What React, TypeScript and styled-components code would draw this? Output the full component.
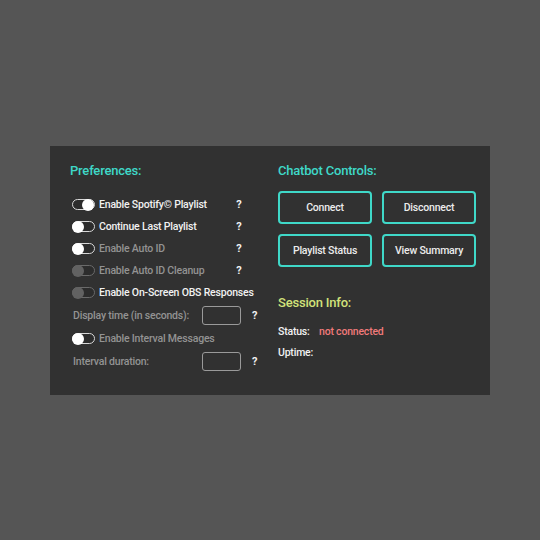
import React from "react";
import styled, { createGlobalStyle } from "styled-components";

const GlobalStyle = createGlobalStyle`
  html, body {
    margin: 0;
    padding: 0;
    background: #555555;
    font-family: Roboto, "Liberation Sans", sans-serif;
  }
  * { box-sizing: border-box; }
`;

const Page = styled.div`
  width: 540px;
  height: 540px;
  display: flex;
  align-items: center;
  justify-content: center;
`;

const Panel = styled.section`
  width: 440px;
  height: 249px;
  background: #313131;
  display: grid;
  grid-template-columns: 208px 198px;
  padding: 17px 14px 0 20px;
`;

const Column = styled.div`
  display: flex;
  flex-direction: column;
`;

const Heading = styled.h2<{ $tone?: "teal" | "lime"; $mt?: number }>`
  margin: ${(p) => p.$mt ?? 0}px 0 0 0;
  font-size: 13px;
  line-height: 16px;
  font-weight: 500;
  letter-spacing: -0.2px;
  color: ${(p) => (p.$tone === "lime" ? "#d2e27a" : "#3fd8c8")};
`;

const List = styled.div`
  margin-top: 15px;
  display: flex;
  flex-direction: column;
`;

const ToggleRow = styled.div`
  height: 22px;
  display: grid;
  grid-template-columns: 29px 133px 14px;
  align-items: center;
`;

const InputRow = styled.div`
  height: 24px;
  display: grid;
  grid-template-columns: 132px 39px 1fr;
  align-items: center;
`;

const Label = styled.span<{ $dim?: boolean; $indent?: boolean }>`
  font-size: 10.5px;
  font-weight: 500;
  letter-spacing: -0.2px;
  white-space: nowrap;
  color: ${(p) => (p.$dim ? "#939393" : "#f1f1f1")};
  padding-left: ${(p) => (p.$indent ? 3 : 0)}px;
`;

const Help = styled.span<{ $pad?: number }>`
  font-size: 11px;
  font-weight: 700;
  color: #f1f1f1;
  text-align: ${(p) => (p.$pad ? "left" : "center")};
  padding-left: ${(p) => p.$pad ?? 0}px;
`;

const Track = styled.span<{ $on?: boolean; $disabled?: boolean }>`
  position: relative;
  margin-left: 2px;
  width: 23px;
  height: 11px;
  border-radius: 6px;
  border: 1px solid ${(p) => (p.$disabled ? "#6a6a6a" : "#d8d8d8")};
  background: #2c2c2c;
  display: block;
`;

const Knob = styled.span<{ $on?: boolean; $disabled?: boolean }>`
  position: absolute;
  top: -1.5px;
  left: ${(p) => (p.$on ? "9px" : "-1px")};
  width: 12px;
  height: 12px;
  border-radius: 50%;
  background: ${(p) => (p.$disabled ? "#626262" : "#ffffff")};
`;

const TextBox = styled.input`
  width: 39px;
  height: 19px;
  border: 1px solid #9a9a9a;
  border-radius: 3px;
  background: transparent;
  padding: 0 4px;
  color: #f1f1f1;
  font: 11px Roboto, sans-serif;
  outline: none;
`;

const ButtonGrid = styled.div`
  margin-top: 12px;
  display: grid;
  grid-template-columns: 94px 94px;
  grid-auto-rows: 33px;
  gap: 10px;
`;

const ActionButton = styled.button`
  background: transparent;
  border: 2px solid #3fd8c8;
  border-radius: 4px;
  color: #ececec;
  font-family: Roboto, sans-serif;
  font-size: 10.5px;
  font-weight: 500;
  letter-spacing: -0.2px;
  padding: 0;
  cursor: pointer;
`;

const InfoList = styled.div`
  margin-top: 10px;
  display: flex;
  flex-direction: column;
`;

const InfoRow = styled.div`
  display: flex;
  line-height: 21px;
  font-size: 10.5px;
  font-weight: 500;
  letter-spacing: -0.2px;
`;

const InfoKey = styled.span`
  width: 41px;
  color: #f1f1f1;
`;

const InfoValue = styled.span<{ $alert?: boolean }>`
  color: ${(p) => (p.$alert ? "#f07a7a" : "#f1f1f1")};
`;

function Toggle({ on, disabled }: { on?: boolean; disabled?: boolean }) {
  return (
    <Track $on={on} $disabled={disabled}>
      <Knob $on={on} $disabled={disabled} />
    </Track>
  );
}

const toggles: { label: string; on?: boolean; knobOff?: boolean; dim?: boolean; help: boolean }[] = [
  { label: "Enable Spotify\u00A9 Playlist", on: true, help: true },
  { label: "Continue Last Playlist", help: true },
  { label: "Enable Auto ID", dim: true, help: true },
  { label: "Enable Auto ID Cleanup", dim: true, knobOff: true, help: true },
  { label: "Enable On-Screen OBS Responses", knobOff: true, help: false },
];

export default function App() {
  return (
    <>
      <GlobalStyle />
      <Page>
        <Panel>
          <Column>
            <Heading>Preferences:</Heading>
            <List>
              {toggles.map((t) => (
                <ToggleRow key={t.label}>
                  <Toggle on={t.on} disabled={t.knobOff} />
                  <Label $dim={t.dim}>{t.label}</Label>
                  {t.help ? <Help>?</Help> : <span />}
                </ToggleRow>
              ))}
              <InputRow>
                <Label $dim $indent>Display time (in seconds):</Label>
                <TextBox />
                <Help $pad={11}>?</Help>
              </InputRow>
              <ToggleRow>
                <Toggle />
                <Label $dim>Enable Interval Messages</Label>
                <span />
              </ToggleRow>
              <InputRow>
                <Label $dim $indent>Interval duration:</Label>
                <TextBox />
                <Help $pad={11}>?</Help>
              </InputRow>
            </List>
          </Column>
          <Column>
            <Heading>Chatbot Controls:</Heading>
            <ButtonGrid>
              <ActionButton>Connect</ActionButton>
              <ActionButton>Disconnect</ActionButton>
              <ActionButton>Playlist Status</ActionButton>
              <ActionButton>View Summary</ActionButton>
            </ButtonGrid>
            <Heading $tone="lime" $mt={28}>Session Info:</Heading>
            <InfoList>
              <InfoRow>
                <InfoKey>Status:</InfoKey>
                <InfoValue $alert>not connected</InfoValue>
              </InfoRow>
              <InfoRow>
                <InfoKey>Uptime:</InfoKey>
              </InfoRow>
            </InfoList>
          </Column>
        </Panel>
      </Page>
    </>
  );
}
